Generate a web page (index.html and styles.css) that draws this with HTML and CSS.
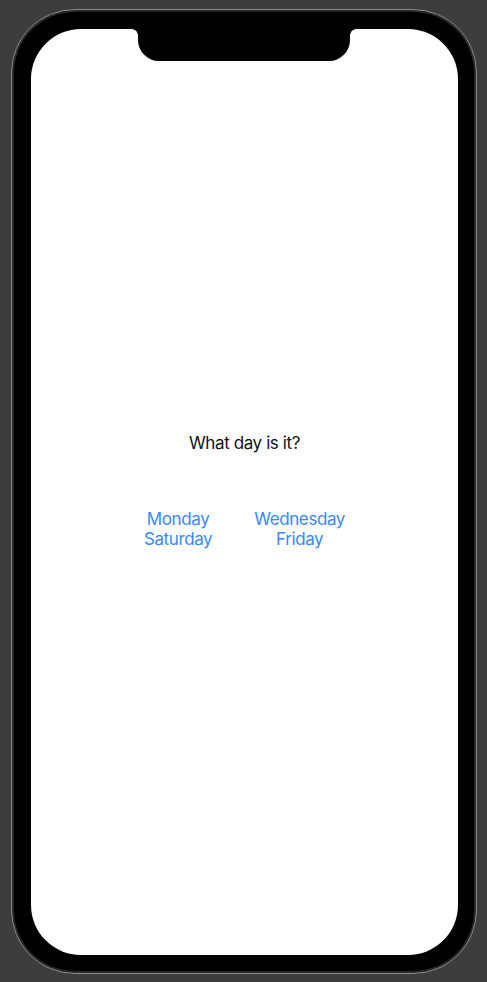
FILE: index.html
```html
<!DOCTYPE html>
<html>
<head>
<meta charset="utf-8">
<link rel="stylesheet" href="styles.css">
</head>
<body>
<div class="device">
  <div class="bezel">
    <div class="screen">
      <div class="notch"></div>
      <div class="content">
        <p class="title">What day is it?</p>
        <div class="choices">
          <div class="col">
            <span class="btn">Monday</span>
            <span class="btn">Saturday</span>
          </div>
          <div class="col">
            <span class="btn">Wednesday</span>
            <span class="btn">Friday</span>
          </div>
        </div>
      </div>
    </div>
  </div>
</div>
</body>
</html>
```
FILE: styles.css
```css
html, body {
  margin: 0;
  padding: 0;
}
body {
  width: 487px;
  height: 982px;
  background: #3d3d3d;
  overflow: hidden;
  font-family: Inter, "Noto Sans", sans-serif;
}
.device {
  box-sizing: border-box;
  margin: 9px 0 0 11px;
  width: 466px;
  height: 965px;
  border: 1px solid #8c8c8c;
  border-radius: 64px;
  background: #272727;
  padding: 2px;
}
.bezel {
  box-sizing: border-box;
  height: 100%;
  background: #000;
  border-radius: 61px;
  padding: 17px 16px 16px 17px;
}
.screen {
  position: relative;
  height: 100%;
  background: #fff;
  border-radius: 50px;
  display: flex;
  align-items: center;
  justify-content: center;
}
.notch {
  position: absolute;
  top: 0;
  left: 107px;
  width: 212px;
  height: 32px;
  background: #000;
  border-radius: 0 0 21px 21px;
}
.notch::before,
.notch::after {
  content: "";
  position: absolute;
  top: 0;
  width: 6px;
  height: 6px;
}
.notch::before {
  left: -6px;
  background: radial-gradient(circle at 0 100%, transparent 5.5px, #000 6px);
}
.notch::after {
  right: -6px;
  background: radial-gradient(circle at 100% 100%, transparent 5.5px, #000 6px);
}
.content {
  display: flex;
  flex-direction: column;
  align-items: center;
  gap: 56px;
  transform: translateY(-1px);
}
.title {
  margin: 0;
  font-size: 17px;
  line-height: 20px;
  letter-spacing: -0.4px;
  color: #111;
}
.choices {
  display: flex;
  gap: 42px;
}
.col {
  display: flex;
  flex-direction: column;
  align-items: center;
}
.btn {
  font-size: 17px;
  line-height: 20px;
  letter-spacing: -0.4px;
  color: #3a89f7;
}
```
